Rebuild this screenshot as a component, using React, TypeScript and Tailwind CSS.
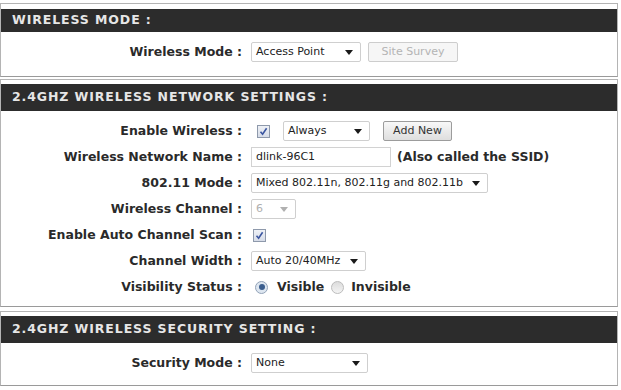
import React from "react";

const Arrow = ({ disabled = false }: { disabled?: boolean }) => (
  <svg width="8" height="5" viewBox="0 0 8 5" className="shrink-0">
    <path d="M0 0 L8 0 L4 5 Z" fill={disabled ? "#b0b0b0" : "#1a1a1a"} />
  </svg>
);

const Select = ({
  text,
  w,
  disabled = false,
}: {
  text: string;
  w: string;
  disabled?: boolean;
}) => (
  <div
    className={`${w} h-[20px] flex items-center justify-between pl-[4px] pr-[7px] bg-white border border-[#cfcfcf] rounded-[2px] text-[11px] ${
      disabled ? "text-[#b0b0b0]" : "text-[#222]"
    }`}
  >
    <span className="whitespace-nowrap">{text}</span>
    <Arrow disabled={disabled} />
  </div>
);

const Check = () => (
  <span className="w-[13px] h-[13px] border border-[#8e99ab] bg-gradient-to-b from-[#eef1f6] to-[#d6dce8] flex items-center justify-center shrink-0">
    <svg width="9" height="9" viewBox="0 0 9 9">
      <path d="M1.5 4.8 L3.6 7.2 L7.6 1.3" stroke="#3a55a0" strokeWidth="1.6" fill="none" />
    </svg>
  </span>
);

const Radio = ({ checked }: { checked: boolean }) =>
  checked ? (
    <span className="w-[13px] h-[13px] rounded-full border border-[#93a3b8] bg-[#dde6f0] flex items-center justify-center shrink-0">
      <span className="block w-[6px] h-[6px] rounded-full bg-[#3b5e8e]" />
    </span>
  ) : (
    <span className="block w-[13px] h-[13px] rounded-full border border-[#bcbcbc] bg-gradient-to-b from-[#dcdcdc] to-[#f4f4f4] shrink-0" />
  );

const Row = ({ label, children }: { label: string; children?: React.ReactNode }) => (
  <div className="h-[26px] flex items-center">
    <div className="w-[241px] text-right font-bold text-[12.5px] text-[#2a2a2a] whitespace-nowrap">
      {label}
    </div>
    <div className="ml-[9px] flex items-center">{children}</div>
  </div>
);

const Header = ({ title, h }: { title: string; h: string }) => (
  <div
    className={`${h} bg-[#2c2c2c] flex items-center pl-[11px] text-[#e6e6e6] font-bold text-[12.5px] tracking-[0.9px] whitespace-nowrap`}
  >
    {title}
  </div>
);

export default function App() {
  return (
    <div
      className="w-[621px] h-[390px] bg-white pt-[3px] overflow-hidden"
      style={{ fontFamily: '"DejaVu Sans", Verdana, sans-serif' }}
    >
      <div className="w-[618px] border border-[#b4b4b4] border-b-[#9a9a9a] pt-[5px]">
        <Header title="WIRELESS MODE :" h="h-[23px]" />
        <div className="pt-[7px] pb-[11px]">
          <Row label="Wireless Mode :">
            <Select text="Access Point" w="w-[110px]" />
            <div className="ml-[7px] w-[90px] h-[20px] border border-[#cdcdcd] rounded-[2px] bg-[#f6f6f6] flex items-center justify-center text-[11px] text-[#b4b4b4]">
              Site Survey
            </div>
          </Row>
        </div>
      </div>

      <div className="mt-[2px] w-[618px] border border-[#b4b4b4] border-b-[#9a9a9a] pt-[4px]">
        <Header title="2.4GHZ WIRELESS NETWORK SETTINGS :" h="h-[27px]" />
        <div className="pt-[7px] pb-[6px]">
          <Row label="Enable Wireless :">
            <span className="ml-[6px]">
              <Check />
            </span>
            <div className="ml-[13px]">
              <Select text="Always" w="w-[87px]" />
            </div>
            <div className="ml-[13px] w-[69px] h-[20px] border border-[#9c9c9c] rounded-[2px] bg-gradient-to-b from-[#f8f8f8] to-[#dedede] flex items-center justify-center text-[11px] text-[#333]">
              Add New
            </div>
          </Row>
          <Row label="Wireless Network Name :">
            <div className="w-[140px] h-[20px] border border-[#d2d2d2] bg-white flex items-center pl-[4px] text-[11px] text-[#222]">
              dlink-96C1
            </div>
            <span className="ml-[6px] font-bold text-[12.5px] text-[#2a2a2a] whitespace-nowrap">
              (Also called the SSID)
            </span>
          </Row>
          <Row label="802.11 Mode :">
            <Select text="Mixed 802.11n, 802.11g and 802.11b" w="w-[237px]" />
          </Row>
          <Row label="Wireless Channel :">
            <Select text="6" w="w-[45px]" disabled />
          </Row>
          <Row label="Enable Auto Channel Scan :">
            <span className="ml-[2px]">
              <Check />
            </span>
          </Row>
          <Row label="Channel Width :">
            <Select text="Auto 20/40MHz" w="w-[115px]" />
          </Row>
          <Row label="Visibility Status :">
            <span className="ml-[4px]">
              <Radio checked />
            </span>
            <span className="ml-[9px] font-bold text-[12.5px] text-[#2a2a2a]">Visible</span>
            <span className="ml-[7px]">
              <Radio checked={false} />
            </span>
            <span className="ml-[7px] font-bold text-[12.5px] text-[#2a2a2a]">Invisible</span>
          </Row>
        </div>
      </div>

      <div className="mt-[4px] w-[618px] border border-[#b4b4b4] border-b-[#9a9a9a] pt-[4px]">
        <Header title="2.4GHZ WIRELESS SECURITY SETTING :" h="h-[27px]" />
        <div className="pt-[7px] pb-[9px]">
          <Row label="Security Mode :">
            <Select text="None" w="w-[117px]" />
          </Row>
        </div>
      </div>
    </div>
  );
}
